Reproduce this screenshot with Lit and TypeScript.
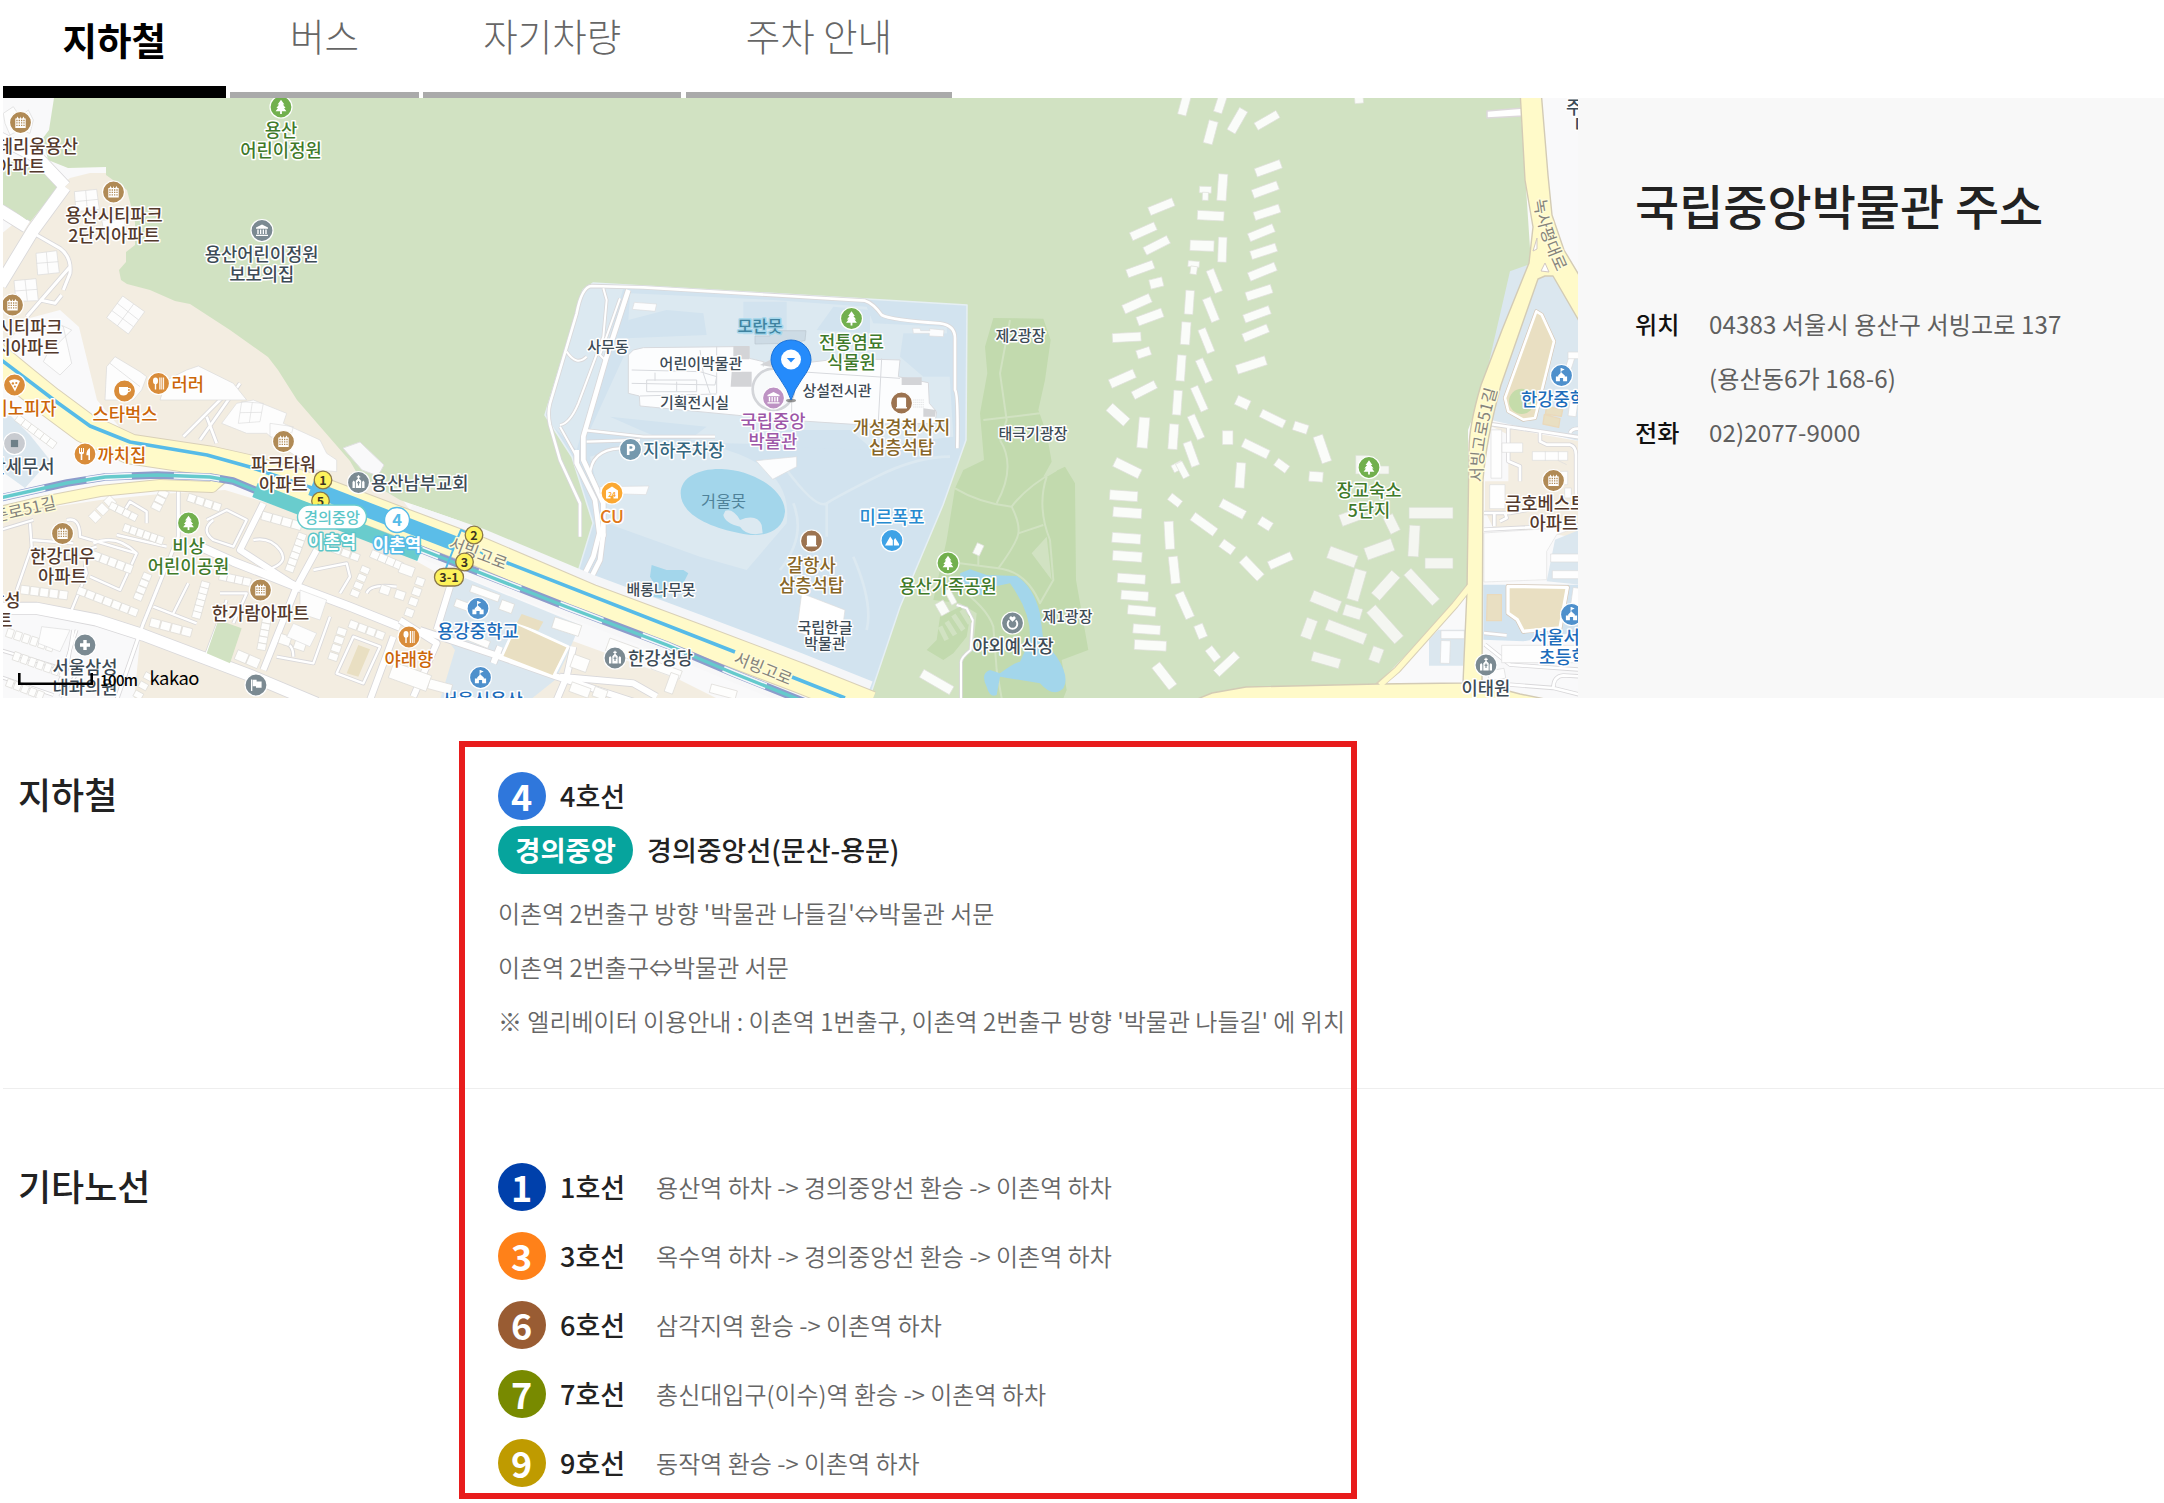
import { LitElement, html, svg, css } from "lit";
import { customElement, property } from "lit/decorators.js";

type Box = [number, number, number, number, number];
type Row = [number, number, number, number, number, number, number];

/* Barracks in the park: centre x, centre y, width, height, angle */
const NORTH: Box[] = [
  [313,22,26,60,15],[422,15,26,60,18],[392,103,28,70,15],[472,68,28,76,30],[561,67,76,25,-30],[837,5,26,22,-5],
  [565,211,80,27,-20],[556,275,80,27,-20],[561,343,80,26,-18],[544,404,80,26,-22],[551,460,80,26,-18],[547,521,86,27,-22],
  [537,584,80,27,-18],[531,649,82,26,-20],[527,705,80,26,-22],[514,801,92,28,-18],[427,268,28,80,4],[376,275,36,20,2],
  [376,295,18,24,2],[392,353,80,28,3],[366,443,72,32,2],[427,455,26,75,2],[341,498,34,18,4],[341,517,20,24,8],
  [403,549,24,72,-22],[328,613,26,72,4],[393,635,26,74,-22],[317,706,28,68,4],[379,728,24,76,-22],[303,810,26,78,4],
  [372,818,24,74,-24],[244,326,78,26,-22],[190,400,80,26,-24],[230,442,80,26,-27],[181,513,84,26,-20],[229,555,40,28,-14],
  [171,617,88,28,-24],[210,657,80,28,-20],[140,718,86,27,-3],[191,764,42,26,-18],[127,842,80,28,-24],[193,876,76,26,-27],
];
const SOUTH: Box[] = [
  [114,50,70,30,42],[190,104,32,92,5],[142,210,84,30,26],[131,293,84,30,4],[142,344,86,30,4],[139,421,86,30,4],
  [142,475,88,30,4],[154,542,84,28,4],[164,593,82,28,4],[185,638,84,28,5],[200,694,82,28,4],[211,742,96,30,3],
  [253,834,30,84,-38],[292,14,26,74,4],[358,2,24,78,-24],[280,116,28,76,4],[348,87,24,76,-24],[334,168,26,76,-20],
  [293,206,34,24,-28],[308,216,22,50,-28],[285,307,40,24,38],[372,379,84,28,36],[458,333,80,28,28],[556,377,40,28,32],
  [442,447,44,28,36],[268,412,28,84,-3],[283,516,28,82,-6],[314,622,28,82,-24],[362,700,28,42,-22],[399,768,26,44,-38],
  [440,798,84,26,-43],[515,511,30,78,-44],[601,488,74,26,-24],[488,14,42,30,25],[578,62,78,26,26],[662,89,44,28,18],
  [727,153,30,84,-19],[443,119,32,42,0],[527,152,84,28,26],[605,203,42,26,36],[481,232,28,76,4],[708,236,42,30,4],
];
const OFFICERS: Box[] = [
  [848,200,42,56,0],[912,216,30,24,0],[1053,345,132,34,0],[1002,429,32,94,3],[1077,496,84,32,0],[810,358,60,36,-20],
  [935,378,32,54,-26],[787,477,88,38,20],[898,454,86,38,-20],[830,561,36,94,16],[917,562,92,34,-48],[1025,567,30,126,-43],
  [737,610,90,36,22],[818,642,54,34,17],[915,679,36,126,-42],[687,692,34,60,20],[798,702,124,34,21],[738,786,86,30,16],
  [889,770,34,44,20],
];
/* Terraces of houses: x1, y1, x2, y2, count, width, height */
const TERRACES: Row[] = [
  [60,90,155,160,6,24,22],[285,380,330,335,3,30,26],[340,350,400,380,4,22,22],[470,350,490,310,3,30,20],[575,325,650,350,4,24,24],
  [380,415,480,450,6,20,24],[265,490,385,535,6,24,26],[75,600,190,615,5,26,26],[245,605,400,665,7,26,24],[440,560,415,620,4,26,20],
  [465,700,560,725,4,30,26],[615,585,590,675,6,26,20],[670,560,740,575,4,24,24],[800,380,890,405,4,30,26],[905,440,870,535,6,26,20],
  [1010,480,1065,500,3,26,22],[1125,495,1195,525,4,26,24],[1095,540,1065,610,4,26,20],[1060,705,1140,735,4,26,24],[800,690,785,770,5,26,20],
  [1025,725,1000,800,4,28,22],[725,800,760,815,2,36,30],[445,860,415,915,3,26,20],[1155,600,1200,615,2,30,26],[855,750,900,765,2,34,30],
  [30,730,150,770,6,20,26],[50,800,190,850,7,20,26],[30,880,120,915,5,20,24],
];

const bld = (b: Box, fill = "#fafcf9", stroke = "#dfe0da") => svg`<rect
  x=${-b[2] / 2} y=${-b[3] / 2} width=${b[2]} height=${b[3]} fill=${fill} stroke=${stroke} stroke-width="2"
  transform="translate(${b[0]} ${b[1]}) rotate(${b[4]})"></rect>`;

const terrace = (r: Row) => {
  const [x1, y1, x2, y2, n, w, h] = r;
  const angle = (Math.atan2(y2 - y1, x2 - x1) * 180) / Math.PI;
  const flat = Math.abs(x2 - x1) > Math.abs(y2 - y1);
  return Array.from({ length: n }, (_, i) => {
    const t = n > 1 ? i / (n - 1) : 0;
    return bld([x1 + (x2 - x1) * t, y1 + (y2 - y1) * t, w, h, flat ? angle : angle + 90], "#fefefd", "#dcdad6");
  });
};

const streets = (list: [string, number][]) => svg`
  ${list.map(([d, w]) => svg`<path d=${d} fill="none" stroke="#d9d8da" stroke-width=${w + 5}></path>`)}
  ${list.map(([d, w]) => svg`<path d=${d} fill="none" stroke="#fff" stroke-width=${w}></path>`)}`;

const GLYPHS: Record<string, unknown> = {
  tree: svg`<path d="M0-7.2 3.4-2.6H1.9L4.6.9H3L5.4 4.2H.9V7H-.9V4.2H-5.4L-3 .9H-4.6L-1.9-2.6H-3.4Z" fill="#fff"></path>`,
  apt: svg`<path d="M-5.2 5.5V-4H-4L-3-6-1.8-4H-.6L0-6 .6-4H1.8L3-6 4-4H5.2V5.5Z" fill="#fff"></path>
    <path d="M-4.2-2H4.2M-4.2.4H4.2M-4.2 2.8H4.2" stroke="currentColor" stroke-width="1.3" stroke-dasharray="1.3 1.05" fill="none"></path>`,
  museum: svg`<path d="M0-6 6-3V-1.8H-6V-3ZM-4.7-.9H-3.3V3.4H-4.7ZM-2-.9H-.7V3.4H-2ZM.7-.9H2V3.4H.7ZM3.3-.9H4.7V3.4H3.3ZM-6 4.2H6V5.6H-6Z" fill="#fff"></path>`,
  food: svg`<path d="M-6-6V-1.5Q-6 0-4.3.3V6H-2.7V.3Q-1 0-1-1.5V-6H-2V-2H-3V-6H-4V-2H-5V-6ZM5-6V6H3.4V1.2H1.4Q1.4-4.5 5-6Z" fill="#fff"></path>`,
  dine: svg`<ellipse cx="-3" cy="-2.6" rx="2.5" ry="3.3" fill="#fff"></ellipse><path d="M-3.7 0H-2.3V6H-3.7ZM.8-6H2V6H.8ZM2.8-6H3.8V6H2.8ZM4.6-6H5.6V6H4.6Z" fill="#fff"></path>`,
  coffee: svg`<path d="M-5.5-4H3.5V-3H4.5Q6.8-3 6.6-.9 6.4 1.2 3.6 1.3 2.6 4.5-1 4.5-5.5 4.5-5.5 0ZM3.7-1.9V.1Q5.4.2 5.4-1 5.4-1.9 4.5-1.9Z" fill="#fff" fill-rule="evenodd"></path>`,
  pizza: svg`<path d="M-5.5-4Q0-7.5 5.5-4L.5 6.5Z" fill="#fff"></path><circle cx="-1.6" cy="-1.6" r="1.2" fill="currentColor"></circle><circle cx="1.8" cy="-2" r="1.1" fill="currentColor"></circle><circle cx=".4" cy="1.6" r="1" fill="currentColor"></circle>`,
  square: svg`<rect x="-3.6" y="-3.6" width="7.2" height="7.2" fill="#6d7f87"></rect>`,
  church: svg`<path d="M0-7.2V-3.5M-1.7-5.7H1.7" stroke="#fff" stroke-width="1.2"></path><path d="M-2.7 5.5V-1.8L0-4.6 2.7-1.8V5.5ZM-6 5.5V-.4L-4.8-2-3.6-.4V5.5ZM3.6 5.5V-.4L4.8-2 6-.4V5.5Z" fill="#fff"></path><path d="M0-1.6V3M-1.5.2H1.5" stroke="currentColor" stroke-width="1.1"></path>`,
  plus: svg`<path d="M-1.7-5H1.7V-1.7H5V1.7H1.7V5H-1.7V1.7H-5V-1.7H-1.7Z" fill="#fff"></path>`,
  flag: svg`<path d="M-5-5.5H-3.7V6H-5ZM-3.2-5.2H.6V-3.6H5.6V2.8H0V1.2H-3.2Z" fill="#fff"></path>`,
  school: svg`<path d="M-.3-7.5 3.2-6-.1-4.6V-3L3.3.1V1.1H5.6V5.8H1.6V2.6H-1.6V5.8H-5.6V1.1H-3.3V.1L-.9-2.4V-7.5Z" fill="#fff"></path>`,
  parking: svg`<path d="M-3.6 5.6V-5.6H.8Q4.7-5.4 4.7-2 4.7 1.5.8 1.7H-1V5.6ZM-1-3.2V-.7H.5Q2-.8 2-2 2-3.1.5-3.2Z" fill="#fff" fill-rule="evenodd"></path>`,
  store: svg`<path d="M0-6.5 6-2.6V5.6H1.5V2.8H-1.5V5.6H-6V-2.6Z" fill="#fff"></path>`,
  stone: svg`<path d="M-3.8-5.5H3.8L4.6-4.5V4H5.4V5.6H-5.4V4H-4.6V-4.5Z" fill="#fff"></path>`,
  falls: svg`<path d="M-7 5-1.8-4 .8-.2V5ZM1.9 5V-.6L3.2-2.6 7 3.4V5Z" fill="#fff"></path>`,
  ring: svg`<path d="M-3.2-2.6A4.8 4.8 0 1 0 3.2-2.6" fill="none" stroke="#fff" stroke-width="1.9"></path><path d="M0-1.2-3-4.2Q-3.4-6.8-1.4-6.8L0-5.7 1.4-6.8Q3.4-6.8 3-4.2Z" fill="#fff"></path>`,
};

/* x, y, colour, glyph */
const PINS: [number, number, string, string][] = [
  [281,107,"#72b04e","tree"],[20.5,122.5,"#b08a55","apt"],[113.5,192,"#b08a55","apt"],[262,230.5,"#7b8a92","museum"],
  [12.5,305,"#b08a55","apt"],[14.5,385,"#d98c39","pizza"],[158.5,383.5,"#d98c39","dine"],[124.5,391,"#d98c39","coffee"],
  [85,454,"#d98c39","food"],[14.5,443.5,"#c8cbd0","square"],[283.5,441.5,"#b08a55","apt"],[358.5,482.5,"#7b8a92","church"],
  [62.5,533.5,"#b08a55","apt"],[188.5,523,"#72b04e","tree"],[260.5,590,"#b08a55","apt"],[85,645,"#7b8a92","plus"],
  [256,685,"#7b8a92","flag"],[612,493,"#fba832","store"],[630.5,449.5,"#7498ad","parking"],[478,608.5,"#4e90cc","school"],
  [480.5,677.5,"#4e90cc","school"],[409,637,"#d98c39","dine"],[615,658,"#7b8a92","church"],[851.5,318.5,"#72b04e","tree"],
  [773.5,398,"#bd92c3","museum"],[901.5,403,"#9c7350","stone"],[892,540.5,"#3ea2e6","falls"],[811.5,541,"#9c7350","stone"],
  [948,563,"#72b04e","tree"],[1012.5,623,"#7b8a92","ring"],[1369,467.5,"#72b04e","tree"],[1561.5,375.5,"#4e90cc","school"],
  [1553.5,480.5,"#b08a55","apt"],[1571.5,614.5,"#4e90cc","school"],[1486,665,"#7b8a92","church"],
];

const BR = "#54392c", GN = "#3f7a2a", GY = "#3d4b56", OR = "#cc6608", BL = "#1c6cbb", GO = "#876628";
/* text, x, baseline, colour, anchor, size */
type Label = [string, number, number, string, string?, number?];
const LABELS: Label[] = [
  ["용산",281,136,GN],["어린이정원",281,156,GN],
  ["테리움용산",78,152.5,BR,"end"],["아파트",45,172,BR,"end"],
  ["용산시티파크",114,221,BR],["2단지아파트",114,241,BR],
  ["용산어린이정원",261.7,260,GY],["보보의집",261.7,280,GY],
  ["시티파크",62.5,333.5,BR,"end"],["단지아파트",59.5,353.5,BR,"end"],
  ["도미노피자",56.5,414,OR,"end"],["러러",171.5,390,OR,"start"],["스타벅스",125,420.5,OR],["까치집",97.5,461,OR,"start"],
  ["용산세무서",54.5,472.5,GY,"end"],["파크타워",283.5,470.5,BR],["아파트",283.5,490.5,BR],["용산남부교회",371,489,GY,"start"],
  ["한강대우",62.5,562.5,BR],["아파트",62.5,582.5,BR],["비상",188.5,552,GN],["어린이공원",188.5,572,GN],
  ["한가람아파트",260.5,619,BR],["서울삼성",85,673.5,GY],["내과의원",85,693.5,GY],["삼성",20.5,606.5,BR,"end"],["아파트",12.5,626,BR,"end"],
  ["CU",612,522,"#e07818"],["지하주차장",643,456.5,"#35677f","start"],["배롱나무못",661,594,GY,"middle",15],
  ["용강중학교",478,637.5,BL],["서울신용산",482,706,BL],["야래향",409,665,OR],["한강성당",628,664.5,GY,"start"],
  ["사무동",608,351.5,GY,"middle",15],["어린이박물관",701,368,GY,"middle",15],["기획전시실",694.5,407.5,GY,"middle",15],
  ["상설전시관",837,395.5,GY,"middle",15],["전통염료",851.5,348,GN],["식물원",851.5,368,GN],
  ["국립중앙",773,427,"#9d57a8"],["박물관",773,447,"#9d57a8"],["개성경천사지",901.5,433,GO],["십층석탑",901.5,453,GO],
  ["미르폭포",892,523.5,"#278bd0"],["갈항사",811.5,571,GO],["삼층석탑",811.5,591,GO],["용산가족공원",948,592,GN],
  ["국립한글",825,632,GY,"middle",15],["박물관",825,648.5,GY,"middle",15],["야외예식장",1013,652.5,GY],
  ["제1광장",1067.5,621,GY,"middle",15],["제2광장",1020.5,340.5,GY,"middle",15],["태극기광장",1033,438,GY,"middle",15],
  ["장교숙소",1369,496,GN],["5단지",1369,516.5,GN],["한강중학교",1521,405,BL,"start"],
  ["금호베스트빌",1505,509,BR,"start"],["아파트",1529.5,529,BR,"start"],["서울서빙고",1531,643.5,BL,"start"],["초등학교",1539,663.5,BL,"start"],
  ["이태원",1486,694,GY],["주한",1566,113.5,GY,"start"],["미",1574.5,131,GY,"start"],
];

const MAIN = "M-10 353 25 382 50 402 85 428 130 449 210 461 250 470 310 488 400 522 480 552 590 599 700 640 800 678 870 706";
const RAIL = "M0 498 67 483 105 477 157 475 210 477 233 481 262 493";
const RAIL2 = "M395 543 420 549 473 570 567 607 667 645 733 673 810 704";

@customElement("kakao-map")
class KakaoMap extends LitElement {
  static styles = css`
    :host { display: block; width: 1575px; height: 600px; }
    svg { display: block; width: 100%; height: 100%; }
    text { font-family: "Noto Sans CJK KR", sans-serif; }
    .name { font-weight: 500; paint-order: stroke; stroke: #fff; stroke-width: 3px; stroke-linejoin: round; }
    .bold { font-weight: 700; }
    .road { font-size: 16.5px; fill: #85837c; paint-order: stroke; stroke: #fffbd6; stroke-width: 3px; stroke-linejoin: round; }
  `;

  render() {
    return html`<svg viewBox="3 98 1575 600" stroke-linejoin="round">
      <rect x="0" y="98" width="1580" height="600" fill="#f9f9fa"></rect>

      <path fill="#f3ede1" d="M70 178 90 173 110 173 150 190 150 270 200 290 290 350 410 510 380 500 300 478 220 455 130 440 97 400 79 327 60 310 30 318 0 350V235Z"></path>
      <path fill="#f3ede1" d="M0 515 100 500 160 494 225 490 290 510 400 552 450 580 440 625 500 650 530 640 570 640 680 680 720 700H0Z"></path>
      <path fill="#f9f9fa" d="M0 610 70 615 140 640 134 700H0Z"></path>
      <path fill="#dbe7ef" d="M0 405 30 435 50 460 25 488 0 470Z"></path>
      <path fill="#dbe7ef" d="M465 578 580 625 565 660 555 680 530 700H440L455 650 440 630 450 590Z"></path>

      <path fill="#d1e2c2" d="M54 98 49 130 43 138 48 160 68 168 106 167V175L127 190 135 222V245L126 252V262L119 270 121 280 127 284 150 290 175 301 190 304 230 330 268 357 278 370 297 400 350 461 358 475 400 500 460 521 560 568 585 600 870 698H1200L1212 693 1246 687 1378 684 1468 590V430L1531 263 1520 98Z"></path>
      <path fill="#d1e2c2" d="M0 160 35 165 60 185 30 222 0 205Z"></path>
      <path fill="#f9f9fa" d="M343 448 360 442 384 465 378 476 362 470Z" stroke="#e0e0e0"></path>

      <path fill="#d2e3ef" stroke="#e6eff4" stroke-width="1.5" d="M545 415 583 290 593 283 867 299 967 305 966 440 943 505 900 607 870 696 582 578 578 572 593 523 572 457Z"></path>
      <g transform="translate(540 270) scale(.33333)">
        <path fill="#dce9f1" d="M130 55H250L180 300 110 540 40 470 20 430Z"></path>
        <path fill="#dce9f1" d="M270 70 700 90 980 110 1000 160 1220 170 1240 500 1000 530 560 520 150 480 260 240Z"></path>
        <path fill="#d2e3ef" d="M265 150 380 120 490 130 500 195 260 205ZM610 95 740 95V190L610 195ZM880 110 990 120 990 190 830 180ZM1090 190 1230 190 1240 320 1150 320 1080 260Z"></path>
        <path fill="#d2e3ef" d="M210 440 500 470 420 530 300 480ZM700 480 930 480 1000 540 700 530Z"></path>
        <path fill="#dce9f1" d="M150 560Q420 480 560 540 760 600 740 760L620 900 480 860 200 760Z"></path>
        <path fill="none" stroke="#dce9f1" stroke-width="8" d="M740 600Q830 720 860 700T1010 620 1230 560M860 700V800M940 860Q1000 1000 980 1080M760 700Q800 800 720 900"></path>
        ${streets([
          ["M120 800V700L60 570 30 465Q22 430 30 400L110 130Q125 50 155 48L310 52 975 92Q1000 100 1025 135 1050 150 1200 160 1245 165 1245 205V360Q1255 370 1252 535", 8],
          ["M60 465Q90 460 115 400L190 200 200 90 190 55", 6],
          ["M80 245Q110 290 140 260M60 470 110 560M240 85 180 255 195 270", 6],
          ["M265 60 200 260 130 500 130 570 190 700V800", 14],
          ["M130 480 310 500H525M140 515 300 510M150 620Q150 540 240 535", 7],
          ["M110 540V580L165 690 178 790 160 860 90 1000", 14],
          ["M190 790 180 870 110 1010", 14],
        ])}
        <path fill="#fcfdfe" stroke="#d8dade" stroke-width="3" d="M265 370V255L280 240 310 233 580 230H628V265L670 275 700 290 910 265 1080 270 1075 320 1165 338 1168 400 1190 425 1185 460 940 463 740 450 300 408 298 378Z"></path>
        <path fill="none" stroke="#d8dade" stroke-width="3" d="M275 300 480 305 530 320 525 345 275 340M480 240 490 310 510 370M320 330H470V365H320ZM345 308V332M410 335V365M700 300 1080 325M1025 265 1015 455M755 300V450M670 335 750 330 755 380 670 385ZM670 275V290M530 230V370M300 378 530 372"></path>
        <path fill="#d3d4d7" d="M580 228H628V268H580ZM575 305H635V350H572ZM690 270 700 292 660 285ZM1085 322H1145V345H1085ZM1150 415 1188 420 1185 440 1150 440Z"></path>
        <path fill="none" stroke="#b9babd" stroke-width="1.5" stroke-dasharray="3 3" d="M1120 390H1152M1120 397H1152M1120 404H1152M1120 411H1152"></path>
        <circle cx="700" cy="358" r="62" fill="#f8fafb" stroke="#d3d5d9" stroke-width="8"></circle>
        <path fill="#cddbe5" stroke="#b9c5cf" stroke-width="2" d="M690 182H798L795 212 740 220 645 222V198H690Z"></path>
        <path fill="#fcfdfe" stroke="#dcdcde" stroke-width="2" d="M283 97 350 102 345 124 277 118ZM1118 175H1140L1142 182H1170L1168 176 1212 180 1210 200 1168 198V190H1120ZM648 572 770 560 770 590 698 628ZM180 650 327 648 318 674 180 670Z"></path>
        <path fill="#a3d6eb" d="M422 670C422 620 480 595 545 597 640 600 735 660 735 725 730 790 660 805 600 790 500 770 422 730 422 670Z"></path>
        <path fill="#dce9f1" d="M556 722Q580 715 600 750 650 730 665 765L668 790Q620 800 600 770 555 760 550 735Z"></path>
        <path fill="#a3d6eb" d="M335 885 380 900 430 900 445 910 430 940 380 935 365 985 340 980 345 945 330 920Z"></path>
        <path fill="#fff" stroke="#ddd" stroke-width="2" d="M785 970 915 1020 900 1130 770 1085ZM230 965 300 1000 440 1030 430 1045 230 985Z"></path>
      </g>

      <g transform="translate(780 440) scale(.33333)">
        <path fill="#c2daae" d="M640 -366 790 -364 812 -300 795 -180 775 -90 800 -20 815 65 790 110 855 80 885 130 888 420 925 630 845 660 860 750 850 775H545L545 660 580 620 590 520 540 490 460 480 500 300 525 145 550 90 612 60 600 -80 622 -200 615 -280Z"></path>
        <path fill="#d1e2c2" d="M755 340 800 290 815 420ZM550 540 580 540 575 620 545 640Z"></path>
        <path fill="none" stroke="#d1e2c2" stroke-width="6" d="M525 145Q600 190 695 200 740 140 830 90M660 0Q710 80 650 190M695 200Q720 250 715 280T655 385M655 385 540 370M655 385Q740 395 780 490L820 420 810 300Q770 200 800 110M715 280 790 255M595 345V380M530 440Q620 500 640 560L650 690 665 775M690 -360 660 -200 680 -60 660 0M610 -60 780 -80"></path>
        <path fill="#a3d6eb" d="M540 400 570 388 620 405 710 408Q760 440 780 520L790 600 830 650Q870 710 850 745 820 775 780 730 720 720 660 710L650 765Q630 775 620 740 600 700 630 690L660 700Q700 670 720 665L750 600Q755 520 690 430L640 440 630 465 590 465 580 440 545 430Z"></path>
        ${streets([["M530 495 560 505 578 540 572 630Q540 655 543 670V780", 6]])}
        <path fill="#c2daae" d="M440 630 470 600 480 530 540 500 570 530 560 590 520 640 490 660Z"></path>
        <path stroke="#d1e2c2" stroke-width="15" d="M480 560 500 600M500 545 525 585M520 525 550 570M545 510 570 550"></path>
        ${([[595,328,22,34,25],[487,504,28,40,-30],[512,470,18,48,-28],[470,726,104,28,30]] as Box[]).map((b) => bld(b))}
      </g>

      <g transform="translate(1080 98) scale(.33333)">${NORTH.map((b) => bld(b))}</g>
      <g transform="translate(1080 398) scale(.33333)">
        ${SOUTH.map((b) => bld(b))}${OFFICERS.map((b) => bld(b, "#f4f6f1", "#dadfd3"))}
        <path fill="#f9f9fa" d="M920 857 1165 590V857Z"></path>
        <path fill="#dbe7ef" d="M1075 695H1155V803H1047V725Z"></path>
        ${([[1118,710,70,24,0],[1096,762,28,68,2]] as Box[]).map((b) => bld(b, "#fcfdfe", "#ddd"))}
      </g>

      <!-- blocks east of Noksapyeong-daero -->
      <g transform="translate(1080 398) scale(.33333)">
        <path fill="#dbe7ef" d="M1290 -380 1400 -420 1500 -230V130L1230 65 1200 10Z"></path>
        <path fill="#f3ede1" d="M1225 80 1500 130V420L1360 400 1240 390 1215 340V250H1285V110Z"></path>
        <path fill="#d2e3ef" d="M1500 385V560H1210V725L1330 730 1500 700Z"></path>
        <path fill="#fcfcfc" stroke="#e2e2e2" stroke-width="2" d="M1212 405 1500 385 1430 410 1400 460V545L1212 552Z"></path>
        <path fill="#dbe7ef" d="M1425 425 1500 395V560L1400 550Z"></path>
        <path fill="none" stroke="#d6c7b6" stroke-width="12" d="M1369 -260 1385 -250 1422 -170 1365 60 1330 65 1285 40 1275 0Z"></path>
        <path fill="#e9dfc2" stroke="#fff" stroke-width="8" d="M1369 -260 1385 -250 1422 -170 1365 60 1330 65 1285 40 1275 0Z"></path>
        <circle cx="1325" cy="10" r="38" fill="#c5dcaa"></circle>
        <path fill="#e9dfc2" stroke="#ead9bb" stroke-width="4" d="M1400 25 1448 35 1444 55 1396 48ZM1393 50 1440 62 1436 88 1389 78ZM1222 590H1264V668H1220Z"></path>
        <path fill="none" stroke="#d6c7b6" stroke-width="14" d="M1284 565 1462 568 1440 690 1330 700 1312 665 1284 645Z"></path>
        <path fill="#e9dfc2" stroke="#fff" stroke-width="10" d="M1284 565 1462 568 1440 690 1330 700 1312 665 1284 645Z"></path>
        ${streets([
          ["M1230 78 1380 100 1500 118M1380 100V130L1400 140H1470Q1488 145 1488 170V300M1285 90V190L1320 205V250", 8],
          ["M1212 345H1290L1345 335M1212 395 1500 380M1275 345 1280 360 1260 370M1243 345V385M1212 705 1280 712M1215 740 1290 800 1500 815M1290 860 1420 870 1500 890M1420 870Q1420 835 1450 832L1500 835M1470 105Q1475 90 1500 92", 8],
        ])}
        ${([[1249,168,32,145,0],[1297,149,62,28,0],[1252,296,46,72,0],[1410,174,106,26,0],[1450,240,26,40,0],[1464,285,20,30,0],[1470,480,116,24,0],[1470,530,106,24,0],[1380,768,230,52,0],[1490,600,30,60,8],[1480,25,24,60,8],[1462,-80,18,90,18],[1480,-128,32,20,0],[1250,830,50,30,-10]] as Box[]).map((b) => bld(b, "#fefefe", "#dcdcdc"))}
        <path fill="none" stroke="#dcdcdc" stroke-width="2" d="M1396 160V188M1435 160V188L1460 200"></path>
      </g>

      <!-- residential streets -->
      <g transform="translate(0 390) scale(.33333)">
        ${streets([
          ["M0 655 110 655 290 690 430 735 760 860 950 940", 34],
          ["M600 470 700 515 890 590 1050 650 1200 710", 24],
          ["M535 300V440L430 700 350 930", 9],
          ["M790 340 720 480 890 590 950 480M890 590 790 840M1180 740 1110 930", 18],
          ["M200 390Q240 380 240 440L410 490M290 470Q240 480 260 550L215 660M90 400 95 470 50 600M0 420 100 390M95 450 220 460", 7],
          ["M365 375 390 335 440 365V400M350 435 500 470M280 460Q350 430 410 490L360 600 270 560", 7],
          ["M460 650 590 700M565 580 520 670M620 390 680 360 740 390 700 470 640 450Q600 420 640 390", 7],
          ["M760 450Q810 440 840 480T800 540M940 540 1040 520 1050 560 1020 610M1100 610Q1110 580 1190 590M660 610 740 610 700 700M680 630 620 790 690 820", 7],
          ["M830 800 940 820 990 680M850 760Q880 760 880 800M1060 740 1140 770 1090 880 1010 850ZM0 780 200 840 220 720", 7],
          ["M550 140 690 0M600 150 720 -20M620 80 650 160", 8],
          ["M0 860 160 915M230 720 170 900M240 840 180 920", 6],
        ])}
        <path fill="#d1e2c2" d="M655 690 725 715 690 820 620 790Z"></path>
        <path fill="#e9dfc2" d="M1075 765 1110 778 1075 860 1040 850Z"></path>
        ${TERRACES.map(terrace)}
        <path fill="#fdfdfd" stroke="#ddd" stroke-width="2" d="M760 30 860 70 850 100 960 150 980 190 1010 210V245L950 240 860 180 800 130 740 130 665 100 710 40ZM125 710 210 720 180 785 115 760ZM900 600 980 630 960 690 900 670ZM880 700 950 730 930 770 860 740Z"></path>
        <path fill="none" stroke="#dedede" stroke-width="2" d="M725 35 790 40 780 95 715 100ZM757 37 748 98M720 68 785 67M810 100 880 110 870 150 810 140Z"></path>
      </g>
      <g transform="translate(0 90) scale(.33333)">
        ${streets([
          ["M0 585 100 420 195 290M0 360 80 410M195 290 110 200 0 145", 36],
          ["M110 435 180 475Q215 500 210 550L190 600M210 530 80 680M120 630 165 640 185 615", 9],
        ])}
        <path fill="#d1e2c2" d="M0 230 130 250 160 290 80 390 0 330Z"></path>
        <path fill="#fdfdfd" stroke="#dadada" stroke-width="2" d="M223 305 290 298 298 358 228 365ZM257 302 262 362M225 335 294 328M108 490 170 482 178 548 113 555ZM139 486 145 551M110 520 175 515M42 572 108 566 115 632 48 634ZM75 569 82 632M45 603 112 598M368 618 434 665 385 732 320 683ZM352 640 416 690M336 662 400 710M401 642 352 708M140 795 215 720 150 690 190 710 215 820 180 855 130 815ZM10 70 40 50 60 80 85 60 100 90 90 130 60 120 30 135 15 100ZM345 800 420 845 440 860 425 900 400 930H315L320 830ZM330 820 420 890M560 840 595 828 700 880 740 930H480L500 870ZM305 390H375V440H315Z"></path>
      </g>
      <g transform="translate(400 390) scale(.33333)">
        ${streets([["M60 720 300 800 470 860 700 935M0 690 110 760 40 920M150 590 110 720M520 770 500 860 470 930M480 860 700 880 770 920M300 770 280 820", 18]])}
        <path fill="#e9dfc2" stroke="#fff" stroke-width="8" d="M350 700 505 770 460 860 305 800Z"></path>
        <path fill="#e9dfc2" d="M365 672 430 695 415 722 350 700Z"></path>
        ${([[200,650,74,24,20],[255,610,90,22,20],[320,650,40,30,20],[230,750,80,22,22],[500,710,84,34,18],[20,540,44,30,20],[60,575,26,24,20],[50,605,26,24,20],[40,635,26,24,20],[28,668,26,24,20],[120,890,70,30,15],[30,860,120,50,20],[540,820,50,40,20],[800,840,90,26,20],[815,880,26,60,20],[540,900,60,30,20],[600,910,40,30,20],[970,905,80,26,15],[670,780,100,40,20]] as Box[]).map((b) => bld(b, "#fefefd", "#dcdad6"))}
      </g>

      <!-- main roads -->
      <g fill="none">
        <path d="M0 512 33 504 100 491 160 485 212 487 226 475" stroke="#d9d0b8" stroke-width="12"></path>
        <path d="M300 498 400 535 480 569 590 612 700 655 810 700" stroke="#f7f7f8" stroke-width="26"></path>
        <path d="M410 511 480 535 590 581 700 622 800 660 870 688" stroke="#f5f6f8" stroke-width="14"></path>
        <path d=${MAIN} stroke="#d9d0b8" stroke-width="31"></path>
        <path d=${MAIN} stroke="#fffac9" stroke-width="29"></path>
        <path d="M0 512 33 504 100 491 160 485 212 487 232 468" stroke="#fffac9" stroke-width="10"></path>
        <path d="M0 359 58 403 90 426 130 442 207 455 250 467 312 488M505 562 735 652M792 677 845 698" stroke="#56bbe8" stroke-width="3.6"></path>
        ${[RAIL, RAIL2].map((d) => svg`<path d=${d} stroke="#8d9ccb" stroke-width="7.5"></path>
          <path d=${d} stroke="#f4f6fb" stroke-width="6.3" stroke-dasharray="46 42"></path>
          <path d=${d} stroke="#65cacc" stroke-width="3.4"></path>`)}
        <path d="M255 490 420 554" stroke="#69cccd" stroke-width="15"></path>
        <path d="M311 488 456 544" stroke="#5bbde8" stroke-width="15"></path>
        <path d="M456 542 461 530 470 534M455 545 446 568M480 552 486 556" stroke="#56bbe8" stroke-width="2"></path>
        <path d="M1378 686 1397 670 1455 605 1470 586" stroke="#d9d0b8" stroke-width="7.5"></path>
      </g>
      <path fill="#fff" stroke="#dcd8da" stroke-width="1.5" d="M1487 111 1523 108V116L1487 118Z"></path>
      <path fill="#fffac9" stroke="#d3cbb5" stroke-width="1.4" d="M1520 90 1525 180 1533 227 1529 263 1502 330 1481 385Q1469 425 1469 450L1467 590 1463 683 1378 684 1246 687 1212 693 1190 702H1560L1520 694 1482 684 1483 480Q1486 440 1501 385L1538 279 1545 276 1553 276 1582 326V280L1564 250 1552 215 1548 175 1541 90Z"></path>
      <path d="M1380 685 1397 670 1455 605 1471 585" fill="none" stroke="#fffac9" stroke-width="5.5"></path>
      <path fill="#fff" stroke="#d3c8c0" d="M1545 263 1549 272 1541 271ZM1537 238V249L1533 251Z"></path>

      <!-- road names -->
      <text class="road" text-anchor="middle" transform="translate(476 559) rotate(21)">서빙고로</text>
      <text class="road" text-anchor="middle" transform="translate(761 674) rotate(22)">서빙고로</text>
      <text class="road" text-anchor="end" transform="translate(57 508) rotate(-13)">이촌로51길</text>
      <path id="east" fill="none" d="M1534 200Q1538 238 1568 294"></path>
      <path id="line51" fill="none" d="M1483 482Q1481 440 1502 374"></path>
      <text class="road"><textPath href="#east">녹사평대로</textPath></text>
      <text class="road"><textPath href="#line51">서빙고로51길</textPath></text>

      ${PINS.map(([x, y, c, g]) => svg`<g transform="translate(${x} ${y})" color=${c}>
        <circle r="11" fill=${c} stroke="#fff" stroke-width="1.2"></circle>${GLYPHS[g]}</g>`)}
      <text class="bold" x="612" y="497" font-size="6.5" fill="#fba832" text-anchor="middle">24</text>

      ${LABELS.map(([t, x, y, c, a = "middle", s = 17.7]) => svg`<text class="name" x=${x} y=${y + 0.6} fill=${c} text-anchor=${a} font-size=${s}>${t}</text>`)}
      <text x="760" y="332" font-size="16.3" font-weight="500" fill="#3f83a0" text-anchor="middle" stroke="#a3d6eb" stroke-width="3" paint-order="stroke">모란못</text>
      <text x="723.5" y="506.5" font-size="16.3" fill="#4f8299" text-anchor="middle">거울못</text>

      <!-- station -->
      ${[["1",323,480],["5",320.5,501],["2",474,535],["3",464.5,562]].map(([n, x, y]) => svg`
        <circle cx=${x} cy=${y} r="8.8" fill="#fdf25c" stroke="#8a7748" stroke-width="1.3"></circle>
        <text class="bold" x=${x} y=${Number(y) + 4.6} font-size="12.5" fill="#3d3522" text-anchor="middle">${n}</text>`)}
      <rect x="434.5" y="568.5" width="29" height="17.5" rx="8.7" fill="#fdf25c" stroke="#8a7748" stroke-width="1.3"></rect>
      <text class="bold" x="449" y="582" font-size="12.5" fill="#3d3522" text-anchor="middle">3-1</text>
      <rect x="297.5" y="505" width="69" height="24" rx="12" fill="#fff" stroke="#69cccd" stroke-width="1.4"></rect>
      <text x="332" y="522.5" font-size="15.2" font-weight="500" fill="#5cc6c8" text-anchor="middle">경의중앙</text>
      <text class="bold" x="332" y="548" font-size="17.6" fill="#fff" stroke="#5cc6c8" stroke-width="3" paint-order="stroke" text-anchor="middle">이촌역</text>
      <circle cx="397" cy="520" r="12.5" fill="#fff" stroke="#56bbe8" stroke-width="1.4"></circle>
      <text class="bold" x="397" y="526" font-size="16.5" fill="#56bbe8" text-anchor="middle">4</text>
      <text class="bold" x="397" y="551" font-size="17.6" fill="#fff" stroke="#56bbe8" stroke-width="3" paint-order="stroke" text-anchor="middle">이촌역</text>

      <!-- marker -->
      <ellipse cx="791" cy="400.5" rx="5" ry="1.8" fill="#555" opacity=".6"></ellipse>
      <path d="M791 400Q788 390 780 379 771 367 771 360A20 20 0 1 1 811 360Q811 367 802 379 794 390 791 400Z" fill="#258bfb" stroke="#1a72d8"></path>
      <circle cx="791" cy="359.5" r="10" fill="#fff"></circle>
      <path d="M786.8 358H795.2L791 362.5Z" fill="#258bfb"></path>

      <path d="M19.3 673V683.8H91.7V673" fill="none" stroke="#000" stroke-width="2.6" stroke-linejoin="miter"></path>
      <text x="100" y="686" font-size="15" font-weight="500" fill="#000" textLength="38">100m</text>
      <text x="149.5" y="684.5" font-size="18.4" fill="#000" textLength="50">kakao</text>
    </svg>`;
  }
}

@customElement("line-badge")
class LineBadge extends LitElement {
  @property() line = "";
  static styles = css`
    :host { display: inline-flex; }
    .badge { display: flex; align-items: center; justify-content: center; height: 48px; min-width: 48px; box-sizing: border-box;
      border-radius: 24px; color: #fff; font-weight: 700; font-size: 36px; line-height: 46px; background: #2f77dc; padding: 0 1px 2px 0; }
    .l1 { background: #0040ab; } .l3 { background: #ff8119; } .l6 { background: #995c33; }
    .l7 { background: #788a00; } .l9 { background: #bf9b00; }
    .wide { background: #06a49d; font-size: 27.3px; padding: 0 17.3px 2px; }
  `;
  render() {
    const wide = this.line.length > 1;
    return html`<span class="badge ${wide ? "wide" : `l${this.line}`}">${this.line}</span>`;
  }
}

@customElement("app-root")
class AppRoot extends LitElement {
  static styles = css`
    :host { display: block; width: 2164px; height: 1503px; overflow: hidden; background: #fff; position: relative;
      font-family: "Noto Sans CJK KR", "Noto Sans", sans-serif; color: #222; }
    .tabs { display: flex; gap: 4.6px; height: 98px; padding-left: 3px; }
    .tab { box-sizing: border-box; height: 98px; padding: 8px 59.9px 0; border-bottom: 6px solid #aaa; color: #666;
      font-size: 37.5px; line-height: 54px; font-weight: 300; white-space: nowrap; }
    .tab.on { padding: 12px 59.5px 0; border-bottom: 12px solid #000; color: #000; font-weight: 700; }
    .place { display: flex; padding-left: 3px; height: 600px; }
    .info { flex: 1; background: #f8f8f8; padding: 70px 0 0 57px; }
    .title { margin: 0; font-size: 48px; line-height: 72px; font-weight: 500; white-space: nowrap; }
    .facts { display: grid; grid-template-columns: 74px 1fr; margin: 57px 0 0; font-size: 24.1px; line-height: 54px; }
    .facts dt { font-weight: 500; color: #111; }
    .facts dd { margin: 0; color: #5f5f5f; letter-spacing: 0.1px; }
    .section { display: grid; grid-template-columns: 480px 1fr; margin-left: 3px; padding-left: 15px; }
    .subway { padding-top: 74px; height: 391px; box-sizing: border-box; border-bottom: 1px solid #eee; }
    .other { padding-top: 74px; }
    .heading { margin: 0; font-size: 36px; line-height: 44px; font-weight: 500; }
    .subway .heading { margin-top: -1px; }
    .lines { display: flex; flex-direction: column; gap: 6px; }
    .row { display: flex; align-items: center; height: 48px; gap: 14px; white-space: nowrap; }
    .name { font-size: 27px; font-weight: 500; line-height: 48px; }
    .notes { margin-top: 12px; color: #666; font-size: 24px; line-height: 54px; font-weight: 350; white-space: nowrap; }
    .notes p { margin: 0; }
    .transfers { display: flex; flex-direction: column; gap: 21px; }
    .way { margin-left: 17px; color: #666; font-size: 24px; font-weight: 350; line-height: 48px; }
    .frame { position: absolute; left: 459px; top: 741px; width: 898px; height: 758px; box-sizing: border-box; border: 6px solid #e81c1c; }
  `;

  private readonly transfers: [string, string][] = [
    ["1", "용산역 하차 -> 경의중앙선 환승 -> 이촌역 하차"],
    ["3", "옥수역 하차 -> 경의중앙선 환승 -> 이촌역 하차"],
    ["6", "삼각지역 환승 -> 이촌역 하차"],
    ["7", "총신대입구(이수)역 환승 -> 이촌역 하차"],
    ["9", "동작역 환승 -> 이촌역 하차"],
  ];

  render() {
    return html`
      <nav class="tabs">
        ${["지하철", "버스", "자기차량", "주차 안내"].map((t, i) => html`<div class="tab ${i ? "" : "on"}">${t}</div>`)}
      </nav>
      <div class="place">
        <kakao-map></kakao-map>
        <div class="info">
          <h2 class="title">국립중앙박물관 주소</h2>
          <dl class="facts">
            <dt>위치</dt>
            <dd>04383 서울시 용산구 서빙고로 137<br />(용산동6가 168-6)</dd>
            <dt>전화</dt>
            <dd>02)2077-9000</dd>
          </dl>
        </div>
      </div>
      <section class="section subway">
        <h3 class="heading">지하철</h3>
        <div>
          <div class="lines">
            <div class="row"><line-badge line="4"></line-badge><span class="name">4호선</span></div>
            <div class="row"><line-badge line="경의중앙"></line-badge><span class="name">경의중앙선(문산-용문)</span></div>
          </div>
          <div class="notes">
            <p>이촌역 2번출구 방향 '박물관 나들길'⇔박물관 서문</p>
            <p>이촌역 2번출구⇔박물관 서문</p>
            <p>※ 엘리베이터 이용안내 : 이촌역 1번출구, 이촌역 2번출구 방향 '박물관 나들길' 에 위치</p>
          </div>
        </div>
      </section>
      <section class="section other">
        <h3 class="heading">기타노선</h3>
        <div class="transfers">
          ${this.transfers.map(([n, way]) => html`<div class="row">
            <line-badge line=${n}></line-badge><span class="name">${n}호선</span><span class="way">${way}</span>
          </div>`)}
        </div>
      </section>
      <div class="frame"></div>
    `;
  }
}
